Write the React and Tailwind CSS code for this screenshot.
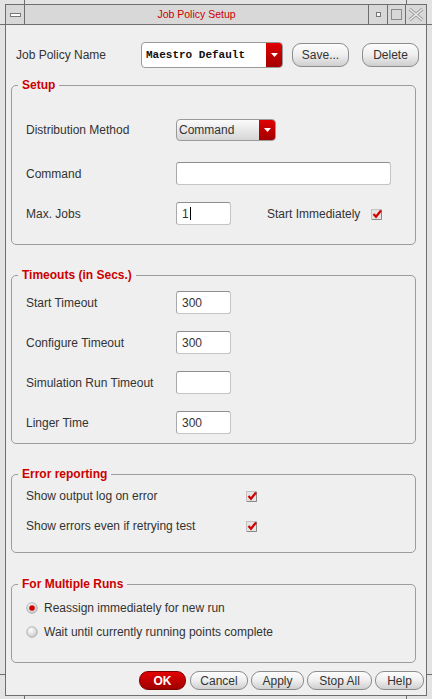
import React from 'react';

const btn =
  'flex items-center justify-center rounded-[9px] border border-[#8c8c8c] bg-gradient-to-b from-[#fdfdfd] via-[#eeeeee] to-[#cfcfcf] text-[12px] text-[#333]';

function Arrow() {
  return (
    <svg width="7" height="4" viewBox="0 0 7 4">
      <path d="M0 0 H7 L3.5 4 Z" fill="#fff" />
    </svg>
  );
}

function Check() {
  return (
    <svg width="12" height="12" viewBox="0 0 12 12">
      <rect x="0.5" y="1.5" width="10" height="10" fill="#e4e4e4" stroke="#c2c2c2" />
      <path d="M10.5 2 V11.5 H1" stroke="#8a8a8a" fill="none" />
      <path d="M2.5 6 L5 8.8 L10 2.5" stroke="#d40000" strokeWidth="2.2" fill="none" />
    </svg>
  );
}

function Radio({ on }) {
  return (
    <svg width="12" height="12" viewBox="0 0 12 12">
      <defs>
        <radialGradient id={on ? 'ron' : 'roff'} cx="0.4" cy="0.35" r="0.7">
          <stop offset="0" stopColor="#ffffff" />
          <stop offset="1" stopColor="#c4c4c4" />
        </radialGradient>
      </defs>
      <circle cx="6" cy="6" r="5.3" fill={`url(#${on ? 'ron' : 'roff'})`} stroke="#a8a8a8" strokeWidth="0.8" />
      {on && <circle cx="6" cy="6" r="2.8" fill="#d00000" />}
    </svg>
  );
}

function Field({ value, w = 'w-[55px]', cursor }) {
  return (
    <div className={`${w} h-[23px] flex items-center pl-[5px] bg-white rounded-[3px] border border-[#c4c4c4] border-t-[#8e8e8e] border-l-[#a8a8a8] text-[12px] text-[#333]`}>
      {value}
      {cursor && <span className="ml-[1px] w-[1px] h-[13px] bg-black" />}
    </div>
  );
}

function Group({ title, className, children }) {
  return (
    <fieldset className={`ml-[5px] w-[405px] border border-[#9c9c9c] rounded-[5px] pl-[14px] ${className}`}>
      <legend className="-ml-[8px] px-[4px] text-[12px] leading-[14px] font-bold text-[#cc0000]">{title}</legend>
      {children}
    </fieldset>
  );
}

function Row({ label, children, h = 'h-[23px]', className = '' }) {
  return (
    <div className={`flex items-center ${h} ${className}`}>
      <div className="w-[150px] shrink-0">{label}</div>
      {children}
    </div>
  );
}

export default function App() {
  return (
    <div className="relative w-[432px] h-[699px] bg-[#e3e3e3] pt-[4px] pl-[5px] pr-[5px] pb-[3px] font-['Liberation_Sans',Arial,sans-serif] text-[12px] text-[#333]">
      {/* frame resize ticks */}
      <div className="absolute left-[24px] top-0 w-[1px] h-[4px] bg-[#6e6e6e]" />
      <div className="absolute left-[406px] top-0 w-[1px] h-[4px] bg-[#6e6e6e]" />
      <div className="absolute left-[24px] bottom-0 w-[1px] h-[4px] bg-[#6e6e6e]" />
      <div className="absolute left-[406px] bottom-0 w-[1px] h-[4px] bg-[#6e6e6e]" />
      <div className="absolute left-0 top-[24px] w-[5px] h-[1px] bg-[#6e6e6e]" />
      <div className="absolute right-0 top-[24px] w-[5px] h-[1px] bg-[#6e6e6e]" />
      <div className="absolute left-0 top-[674px] w-[5px] h-[1px] bg-[#6e6e6e]" />
      <div className="absolute right-0 top-[674px] w-[5px] h-[1px] bg-[#6e6e6e]" />

      <div className="flex flex-col h-full border border-[#6e6e6e] bg-[#efefef]">
        {/* title bar */}
        <div className="flex h-[20px] shrink-0 border-b border-[#6e6e6e] bg-[#d8d8d8]">
          <div className="w-[19px] border-r border-[#6e6e6e] flex items-center justify-center">
            <div className="w-[11px] h-[4px] bg-white border border-[#777]" />
          </div>
          <div className="flex-1 flex items-center justify-center text-[10.5px] text-[#cc0000]">Job Policy Setup</div>
          <div className="w-[19px] border-l border-[#6e6e6e] flex items-center justify-center">
            <div className="w-[5px] h-[5px] bg-[#f4f4f4] border border-[#777]" />
          </div>
          <div className="w-[18px] border-l border-[#6e6e6e] flex items-center justify-center">
            <div className="w-[11px] h-[11px] border border-[#8a8a8a]" />
          </div>
          <div className="w-[21px] border-l border-[#6e6e6e] flex items-center justify-center">
            <svg width="16" height="13" viewBox="0 0 16 13">
              <path d="M1.5 1 L14.5 12 M14.5 1 L1.5 12" stroke="#9a9a9a" strokeWidth="3.2" />
              <path d="M1.5 1 L14.5 12 M14.5 1 L1.5 12" stroke="#ececec" strokeWidth="1.4" />
            </svg>
          </div>
        </div>

        {/* policy name row */}
        <div className="flex items-center h-[26px] mt-[17px] pl-[10px]">
          <div className="w-[125px]">Job Policy Name</div>
          <div className="w-[142px] h-[26px] flex rounded-[4px] border border-[#9a9a9a] bg-white overflow-hidden">
            <div className="flex-1 flex items-center pl-[4px] font-['Liberation_Mono',monospace] font-bold text-[11px] text-[#111]">Maestro Default</div>
            <div className="w-[16px] flex items-center justify-center bg-gradient-to-b from-[#e00000] to-[#a30000]">
              <Arrow />
            </div>
          </div>
          <div className={`${btn} w-[57px] h-[24px] ml-[9px]`}>Save...</div>
          <div className={`${btn} w-[57px] h-[24px] ml-[13px]`}>Delete</div>
        </div>

        <Group title="Setup" className="mt-[10px] pt-[26px] pb-[19px]">
          <Row label="Distribution Method">
            <div className="w-[100px] h-[22px] flex rounded-[4px] border border-[#9a9a9a] bg-gradient-to-b from-[#fbfbfb] to-[#d6d6d6] overflow-hidden">
              <div className="flex-1 flex items-center pl-[2px] text-[12px]">Command</div>
              <div className="w-[16px] flex items-center justify-center bg-gradient-to-b from-[#e00000] to-[#a30000]">
                <Arrow />
              </div>
            </div>
          </Row>
          <Row label="Command" className="mt-[21px]">
            <Field value="" w="w-[215px]" />
          </Row>
          <Row label="Max. Jobs" className="mt-[17px]">
            <Field value="1" cursor />
            <div className="ml-[36px] w-[104px]">Start Immediately</div>
            <Check />
          </Row>
        </Group>

        <Group title="Timeouts (in Secs.)" className="mt-[23px] pt-[9px] pb-[9px]">
          <Row label="Start Timeout">
            <Field value="300" />
          </Row>
          <Row label="Configure Timeout" className="mt-[17px]">
            <Field value="300" />
          </Row>
          <Row label="Simulation Run Timeout" className="mt-[17px]">
            <Field value="" />
          </Row>
          <Row label="Linger Time" className="mt-[17px]">
            <Field value="300" />
          </Row>
        </Group>

        <Group title="Error reporting" className="mt-[23px] pt-[5px] pb-[16px]">
          <div className="flex items-center h-[20px]">
            <div className="w-[220px]">Show output log on error</div>
            <Check />
          </div>
          <div className="flex items-center h-[20px] mt-[10px]">
            <div className="w-[220px]">Show errors even if retrying test</div>
            <Check />
          </div>
        </Group>

        <Group title="For Multiple Runs" className="mt-[24px] pt-[7px] pb-[20px]">
          <div className="flex items-center h-[20px] gap-[6px]">
            <Radio on />
            <span>Reassign immediately for new run</span>
          </div>
          <div className="flex items-center h-[20px] mt-[4px] gap-[6px]">
            <Radio />
            <span>Wait until currently running points complete</span>
          </div>
        </Group>

        {/* dialog buttons */}
        <div className="flex justify-end items-center gap-[3px] mt-[8px] pr-[2px]">
          <div className="mr-[1px] w-[47px] h-[19px] flex items-center justify-center rounded-[9px] border border-[#7a0000] bg-gradient-to-b from-[#e40000] to-[#a00000] text-white font-bold text-[12px]">OK</div>
          <div className={`${btn} w-[58px] h-[19px]`}>Cancel</div>
          <div className={`${btn} w-[53px] h-[19px]`}>Apply</div>
          <div className={`${btn} w-[65px] h-[19px]`}>Stop All</div>
          <div className={`${btn} w-[49px] h-[19px]`}>Help</div>
        </div>
      </div>
    </div>
  );
}
